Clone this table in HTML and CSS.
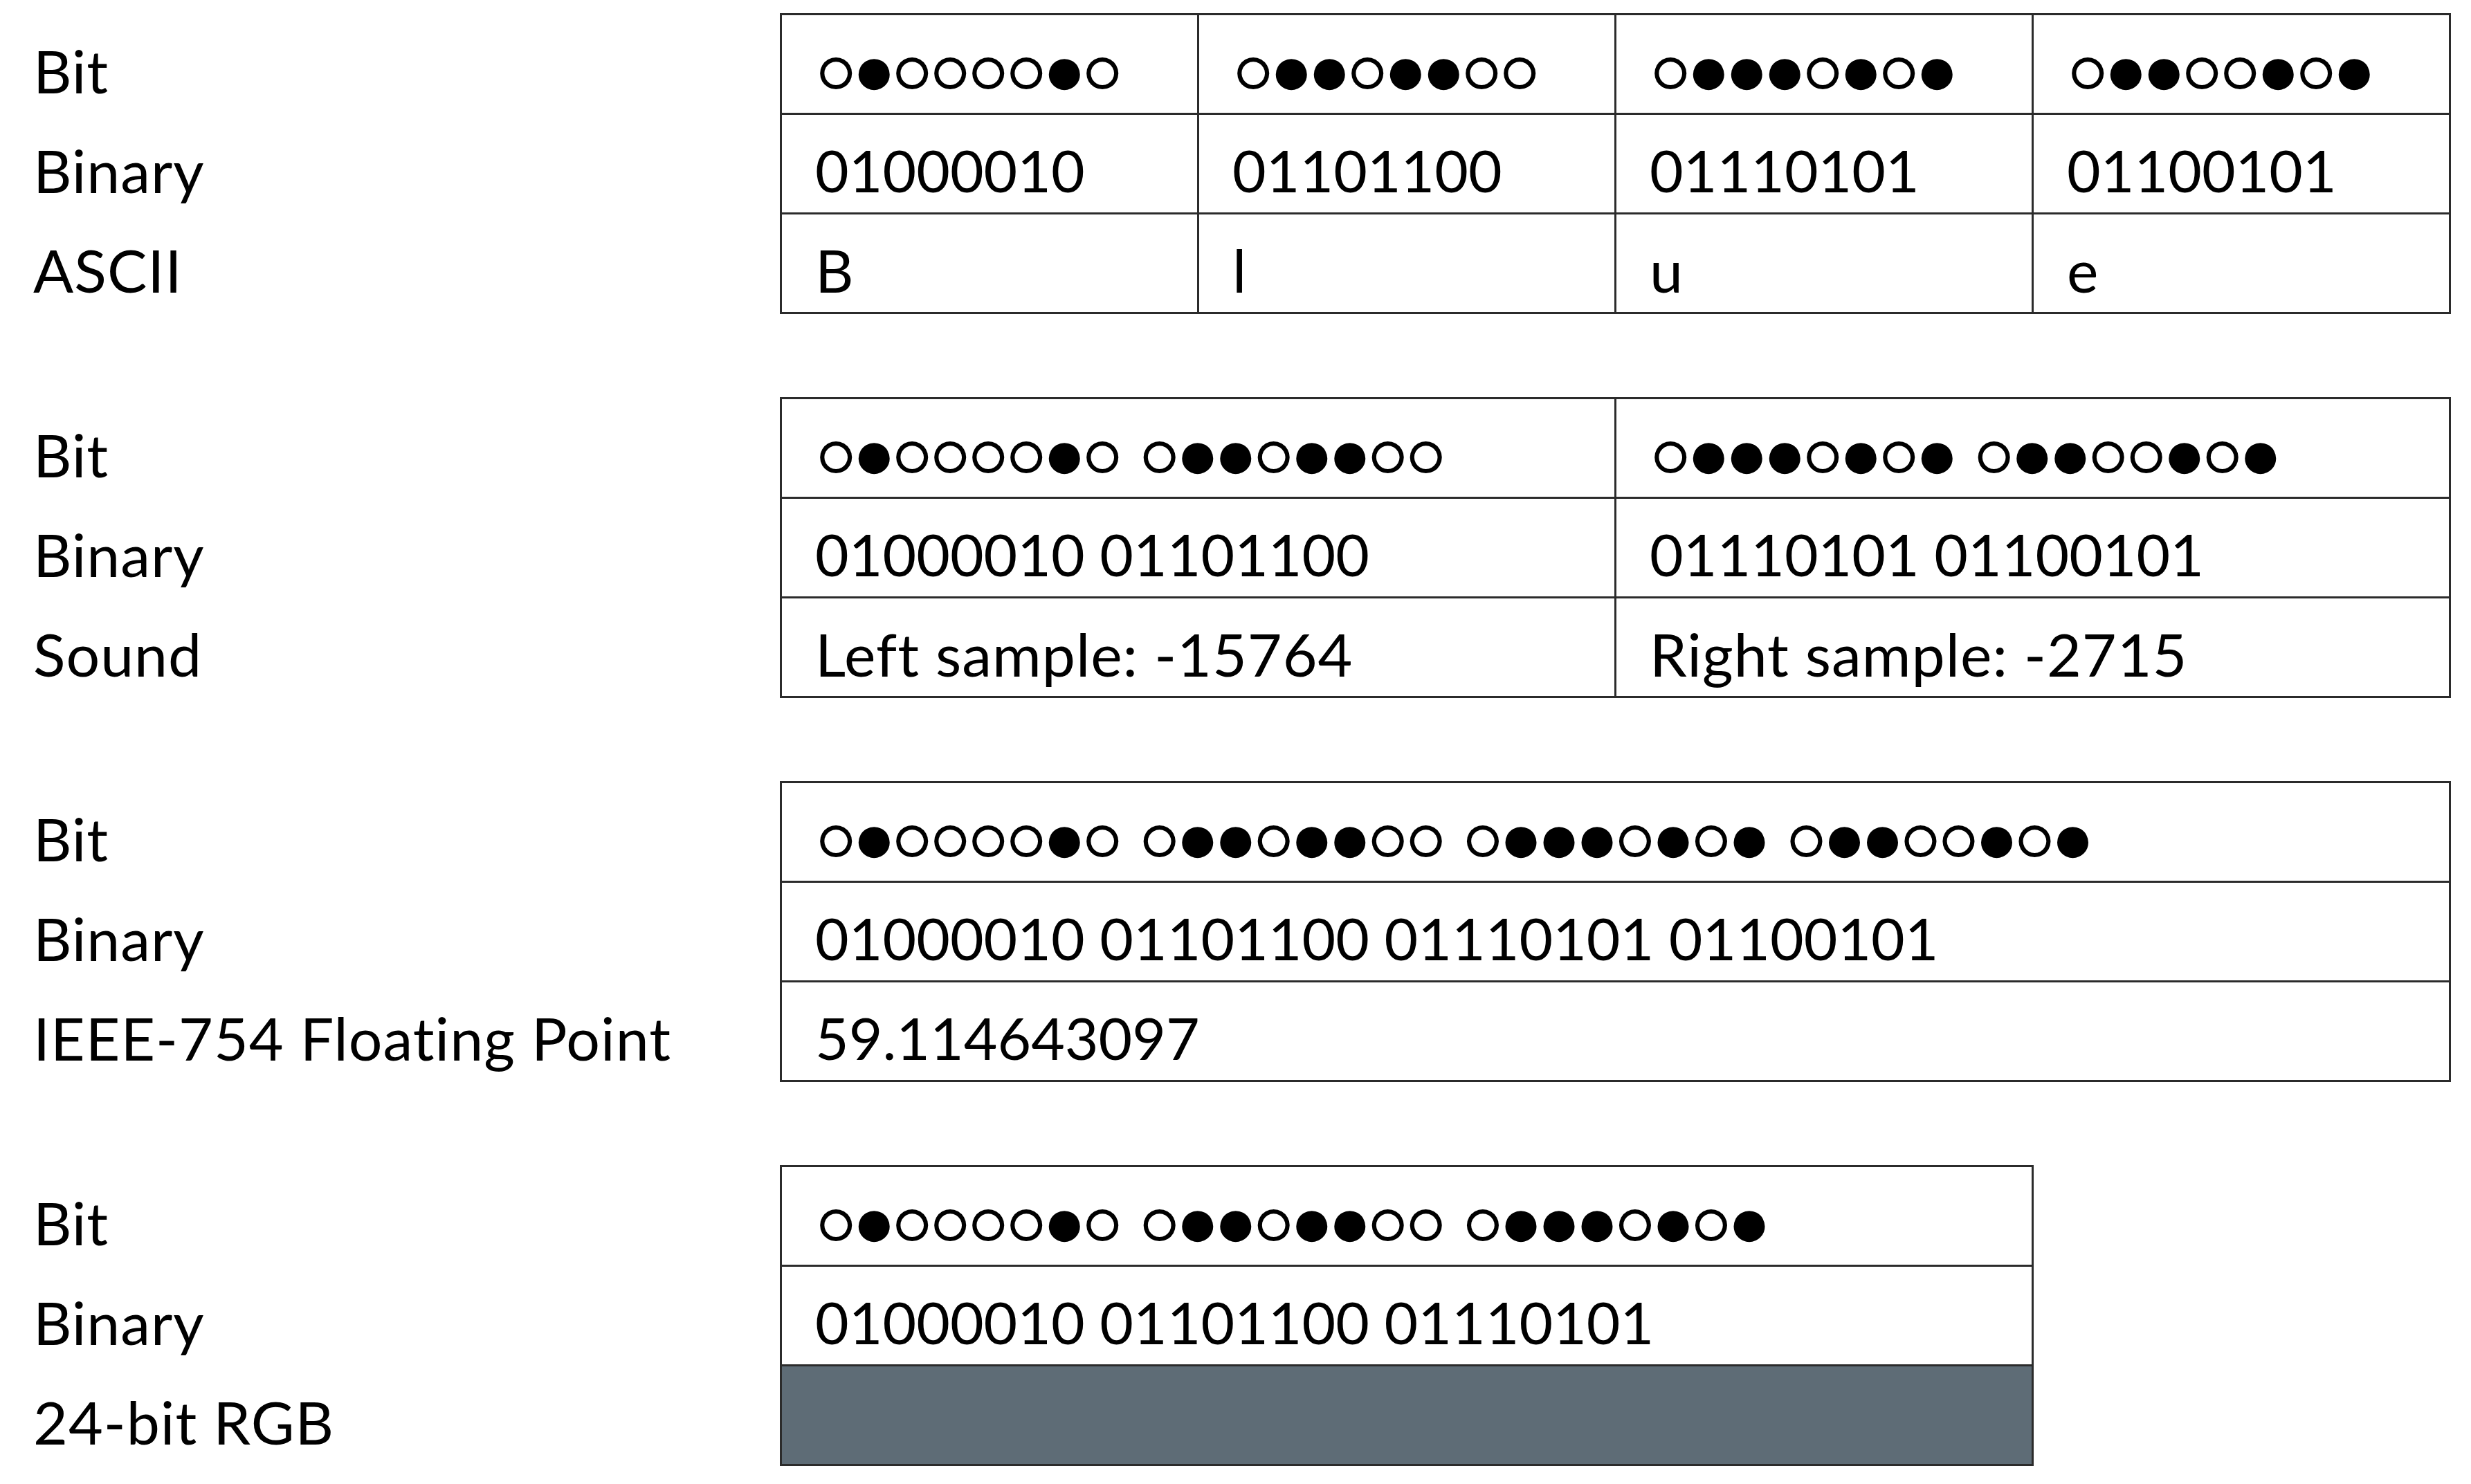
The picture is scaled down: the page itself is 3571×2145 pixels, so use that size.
FILE: index.html
```html
<!DOCTYPE html>
<html lang="en">
<head>
<meta charset="utf-8">
<title>One bit pattern, four meanings</title>
<link rel="stylesheet" href="styles.css">
</head>
<body>
<main class="page">
  <section class="block">
    <div class="labels">
      <div class="lbl">Bit</div>
      <div class="lbl">Binary</div>
      <div class="lbl">ASCII</div>
    </div>
    <div class="grid cols-4">
      <div class="cell"><span class="bits">○●○○○○●○</span></div>
      <div class="cell"><span class="bits">○●●○●●○○</span></div>
      <div class="cell"><span class="bits">○●●●○●○●</span></div>
      <div class="cell"><span class="bits">○●●○○●○●</span></div>
      <div class="cell">01000010</div>
      <div class="cell">01101100</div>
      <div class="cell">01110101</div>
      <div class="cell">01100101</div>
      <div class="cell txt">B</div>
      <div class="cell txt">l</div>
      <div class="cell txt">u</div>
      <div class="cell txt">e</div>
    </div>
  </section>

  <section class="block">
    <div class="labels">
      <div class="lbl">Bit</div>
      <div class="lbl">Binary</div>
      <div class="lbl">Sound</div>
    </div>
    <div class="grid cols-2">
      <div class="cell"><span class="bits">○●○○○○●○ ○●●○●●○○</span></div>
      <div class="cell"><span class="bits">○●●●○●○● ○●●○○●○●</span></div>
      <div class="cell">01000010 01101100</div>
      <div class="cell">01110101 01100101</div>
      <div class="cell txt">Left sample: -15764</div>
      <div class="cell txt">Right sample: -2715</div>
    </div>
  </section>

  <section class="block">
    <div class="labels">
      <div class="lbl">Bit</div>
      <div class="lbl">Binary</div>
      <div class="lbl">IEEE-754 Floating Point</div>
    </div>
    <div class="grid cols-1">
      <div class="cell"><span class="bits">○●○○○○●○ ○●●○●●○○ ○●●●○●○● ○●●○○●○●</span></div>
      <div class="cell">01000010 01101100 01110101 01100101</div>
      <div class="cell">59.114643097</div>
    </div>
  </section>

  <section class="block">
    <div class="labels">
      <div class="lbl">Bit</div>
      <div class="lbl">Binary</div>
      <div class="lbl">24-bit RGB</div>
    </div>
    <div class="grid cols-3">
      <div class="cell"><span class="bits">○●○○○○●○ ○●●○●●○○ ○●●●○●○●</span></div>
      <div class="cell">01000010 01101100 01110101</div>
      <div class="cell rgb"></div>
    </div>
  </section>
</main>
</body>
</html>
```

FILE: styles.css
```css
html,
body {
  margin: 0;
  background: #ffffff;
}

body {
  font-family: Lato, "Open Sans", sans-serif;
  font-size: 84px;
  color: #000000;
}

.page {
  padding-top: 19px;
  display: flex;
  flex-direction: column;
  gap: 120px;
}

.block {
  display: flex;
}

.labels {
  box-sizing: border-box;
  width: 1127px;
  padding: 3px 0 0 48px;
  display: grid;
  grid-template-rows: repeat(3, 144px);
}

.lbl {
  padding-top: 29px;
  line-height: 101px;
  font-size: 86px;
  letter-spacing: 1px;
  white-space: nowrap;
}

.grid {
  display: grid;
  grid-template-rows: repeat(3, 144px);
  border-top: 3px solid #2b2b2b;
  border-left: 3px solid #2b2b2b;
}

.cols-4 {
  grid-template-columns: repeat(4, 603px);
}

.cols-2 {
  grid-template-columns: repeat(2, 1206px);
}

.cols-1 {
  grid-template-columns: 2412px;
}

.cols-3 {
  grid-template-columns: 1809px;
}

.cell {
  box-sizing: border-box;
  border-right: 3px solid #2b2b2b;
  border-bottom: 3px solid #2b2b2b;
  padding: 29px 0 0 48px;
  line-height: 101px;
  white-space: nowrap;
}

.txt {
  font-size: 86px;
  letter-spacing: 1px;
}

.bits {
  font-family: "Liberation Sans", sans-serif;
  font-size: 100px;
  letter-spacing: -5.4px;
  word-spacing: 5px;
  line-height: 1;
  -webkit-text-stroke: 2px #000000;
}

.rgb {
  background: #5e6c76;
}
```
